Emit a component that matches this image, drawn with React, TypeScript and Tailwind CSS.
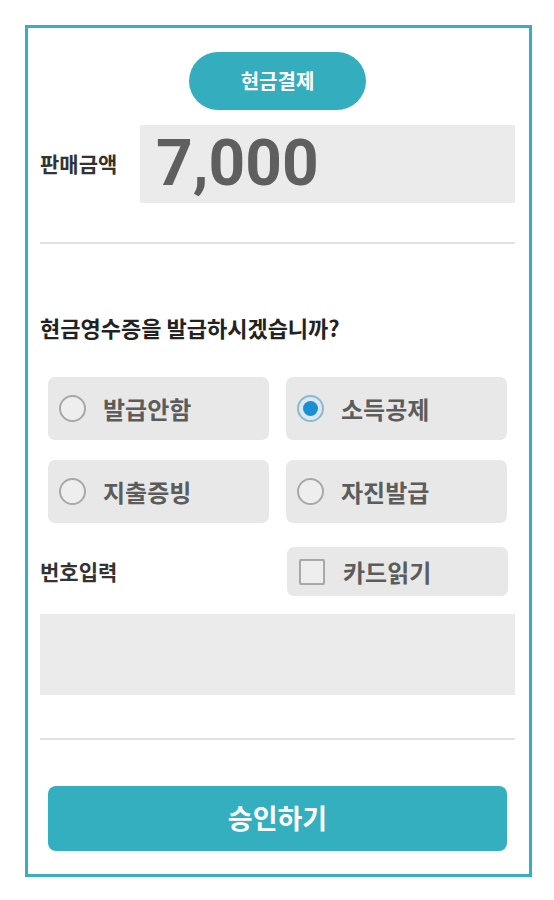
import React from "react";

const KR = { fontFamily: '"Noto Sans CJK KR", "Noto Sans", sans-serif' };

function Radio({ label, checked }: { label: string; checked?: boolean }) {
  return (
    <div className="flex h-full items-center rounded-[7px] bg-[#e8e8e8] pl-[11px]">
      {checked ? (
        <span className="flex h-[27px] w-[27px] items-center justify-center rounded-full border-[2px] border-[#8fb8cc] bg-[#dbe8ee]">
          <span className="h-[15px] w-[15px] rounded-full bg-[#1a8fd6]" />
        </span>
      ) : (
        <span className="h-[27px] w-[27px] rounded-full border-[2px] border-[#a8a8a8] bg-[#eeeeee]" />
      )}
      <span className="ml-[17px] text-[24px] font-bold leading-none text-[#5c5c5c]" style={KR}>
        {label}
      </span>
    </div>
  );
}

export default function App() {
  return (
    <div className="min-h-[900px] w-[554px] bg-white pl-[25px] pt-[25px]" style={KR}>
      <div className="flex h-[852px] w-[507px] flex-col border-[3px] border-[#36afc0] pl-[12px] pr-[14px]">
        <div className="mt-[24px] flex justify-center">
          <div className="flex h-[58px] w-[177px] items-center justify-center rounded-full bg-[#34aebf] text-[20px] font-bold text-white">
            현금결제
          </div>
        </div>
        <div className="mt-[15px] flex items-center">
          <div className="w-[100px] text-[21px] font-bold text-[#333]">판매금액</div>
          <div className="flex h-[78px] flex-1 items-center bg-[#ebebeb] pl-[16px]">
            <span
              className="text-[64px] font-bold leading-none text-[#5f5f5f]"
              style={{ fontFamily: "Roboto, sans-serif" }}
            >
              7,000
            </span>
          </div>
        </div>
        <div className="mt-[39px] h-[2px] bg-[#e2e2e2]" />
        <div className="mt-[72px] text-[22px] font-bold leading-none text-[#222]">
          현금영수증을 발급하시겠습니까?
        </div>
        <div className="mt-[39px] grid grid-cols-2 gap-x-[17px] gap-y-[20px] px-[8px] [grid-auto-rows:63px]">
          <Radio label="발급안함" />
          <Radio label="소득공제" checked />
          <Radio label="지출증빙" />
          <Radio label="자진발급" />
        </div>
        <div className="mt-[24px] flex items-center pr-[7px]">
          <div className="flex-1 text-[21px] font-bold text-[#333]">번호입력</div>
          <div className="flex h-[49px] w-[221px] items-center rounded-[7px] bg-[#e8e8e8] pl-[12px]">
            <span className="h-[26px] w-[26px] rounded-[2px] border-[2px] border-[#a8a8a8] bg-[#eeeeee]" />
            <span className="ml-[18px] text-[24px] font-bold leading-none text-[#5c5c5c]">카드읽기</span>
          </div>
        </div>
        <div className="mt-[18px] h-[81px] bg-[#ebebeb]" />
        <div className="mt-[43px] h-[2px] bg-[#e2e2e2]" />
        <div className="mt-[46px] px-[8px]">
          <div className="flex h-[65px] items-center justify-center rounded-[8px] bg-[#33afc0] text-[27px] font-bold text-white">
            승인하기
          </div>
        </div>
      </div>
    </div>
  );
}
